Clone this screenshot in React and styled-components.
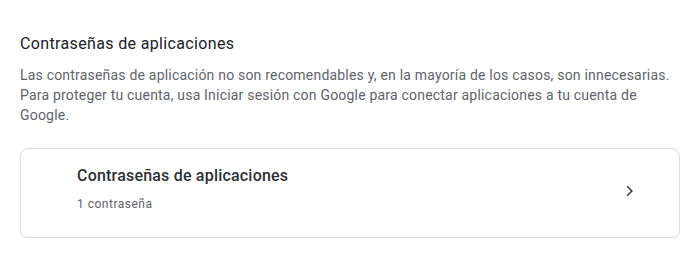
import React from "react";
import styled, { createGlobalStyle } from "styled-components";

const Global = createGlobalStyle`
  html, body { margin: 0; padding: 0; background: #ffffff; }
  body { font-family: Roboto, "Noto Sans", Arial, sans-serif; -webkit-font-smoothing: antialiased; }
`;

const Page = styled.div`
  padding: 32px 16px 0 20px;
`;

const Heading = styled.h2`
  margin: 0;
  font-size: 16px;
  line-height: 24px;
  font-weight: 400;
  color: #202124;
  letter-spacing: 0.35px;
`;

const Description = styled.p`
  margin: 9px 0 0;
  font-size: 14px;
  line-height: 20px;
  color: #5f6368;
  letter-spacing: 0.2px;
`;

const Card = styled.div`
  margin-top: 23px;
  width: 660px;
  box-sizing: border-box;
  border: 1px solid #dadce0;
  border-radius: 8px;
  box-shadow: 0 1px 1px rgba(60, 64, 67, 0.08);
  display: flex;
  align-items: center;
  padding: 15px 37px 25px 56px;
  cursor: pointer;
`;

const CardText = styled.div`
  flex: 1;
  display: flex;
  flex-direction: column;
  gap: 8px;
`;

const CardTitle = styled.div`
  font-size: 16px;
  line-height: 24px;
  font-weight: 500;
  color: #2d3033;
  letter-spacing: 0.2px;
`;

const CardSub = styled.div`
  font-size: 12px;
  line-height: 16px;
  color: #5f6368;
  letter-spacing: 0.5px;
`;

const Chevron = styled.svg`
  width: 24px;
  height: 24px;
  fill: #3c4043;
  margin-top: 6px;
`;

export default function App() {
  return (
    <>
      <Global />
      <Page>
        <Heading>Contraseñas de aplicaciones</Heading>
        <Description>
          Las contraseñas de aplicación no son recomendables y, en la mayoría de los casos, son innecesarias.
          Para proteger tu cuenta, usa Iniciar sesión con Google para conectar aplicaciones a tu cuenta de
          Google.
        </Description>
        <Card>
          <CardText>
            <CardTitle>Contraseñas de aplicaciones</CardTitle>
            <CardSub>1 contraseña</CardSub>
          </CardText>
          <Chevron viewBox="0 0 24 24">
            <path d="M9.7 17.3 8.6 16.2 12.8 12 8.6 7.8 9.7 6.7 15 12z" />
          </Chevron>
        </Card>
      </Page>
    </>
  );
}
